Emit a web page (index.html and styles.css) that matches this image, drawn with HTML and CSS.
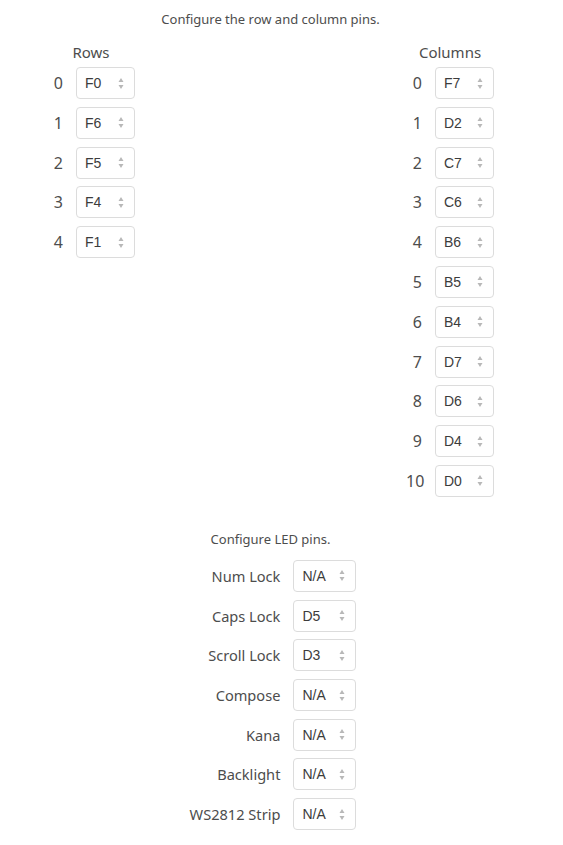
FILE: index.html
```html
<!DOCTYPE html>
<html lang="en">
<head>
<meta charset="utf-8">
<title>Pins</title>
<link rel="stylesheet" href="styles.css">
</head>
<body>
<div class="page">
  <p class="intro">Configure the row and column pins.</p>
  <div class="matrix">
    <section class="pin-group">
      <h3 class="group-title">Rows</h3>
      <div class="pin-list">
        <div class="pin-row"><span class="idx">0</span><div class="pin-select"><span>F0</span><svg class="spin" viewBox="0 0 6 11"><path d="M3 0 L5.5 4 L0.5 4 Z M3 11 L5.5 7 L0.5 7 Z"/></svg></div></div>
        <div class="pin-row"><span class="idx">1</span><div class="pin-select"><span>F6</span><svg class="spin" viewBox="0 0 6 11"><path d="M3 0 L5.5 4 L0.5 4 Z M3 11 L5.5 7 L0.5 7 Z"/></svg></div></div>
        <div class="pin-row"><span class="idx">2</span><div class="pin-select"><span>F5</span><svg class="spin" viewBox="0 0 6 11"><path d="M3 0 L5.5 4 L0.5 4 Z M3 11 L5.5 7 L0.5 7 Z"/></svg></div></div>
        <div class="pin-row"><span class="idx">3</span><div class="pin-select"><span>F4</span><svg class="spin" viewBox="0 0 6 11"><path d="M3 0 L5.5 4 L0.5 4 Z M3 11 L5.5 7 L0.5 7 Z"/></svg></div></div>
        <div class="pin-row"><span class="idx">4</span><div class="pin-select"><span>F1</span><svg class="spin" viewBox="0 0 6 11"><path d="M3 0 L5.5 4 L0.5 4 Z M3 11 L5.5 7 L0.5 7 Z"/></svg></div></div>
      </div>
    </section>
    <section class="pin-group">
      <h3 class="group-title">Columns</h3>
      <div class="pin-list">
        <div class="pin-row"><span class="idx">0</span><div class="pin-select"><span>F7</span><svg class="spin" viewBox="0 0 6 11"><path d="M3 0 L5.5 4 L0.5 4 Z M3 11 L5.5 7 L0.5 7 Z"/></svg></div></div>
        <div class="pin-row"><span class="idx">1</span><div class="pin-select"><span>D2</span><svg class="spin" viewBox="0 0 6 11"><path d="M3 0 L5.5 4 L0.5 4 Z M3 11 L5.5 7 L0.5 7 Z"/></svg></div></div>
        <div class="pin-row"><span class="idx">2</span><div class="pin-select"><span>C7</span><svg class="spin" viewBox="0 0 6 11"><path d="M3 0 L5.5 4 L0.5 4 Z M3 11 L5.5 7 L0.5 7 Z"/></svg></div></div>
        <div class="pin-row"><span class="idx">3</span><div class="pin-select"><span>C6</span><svg class="spin" viewBox="0 0 6 11"><path d="M3 0 L5.5 4 L0.5 4 Z M3 11 L5.5 7 L0.5 7 Z"/></svg></div></div>
        <div class="pin-row"><span class="idx">4</span><div class="pin-select"><span>B6</span><svg class="spin" viewBox="0 0 6 11"><path d="M3 0 L5.5 4 L0.5 4 Z M3 11 L5.5 7 L0.5 7 Z"/></svg></div></div>
        <div class="pin-row"><span class="idx">5</span><div class="pin-select"><span>B5</span><svg class="spin" viewBox="0 0 6 11"><path d="M3 0 L5.5 4 L0.5 4 Z M3 11 L5.5 7 L0.5 7 Z"/></svg></div></div>
        <div class="pin-row"><span class="idx">6</span><div class="pin-select"><span>B4</span><svg class="spin" viewBox="0 0 6 11"><path d="M3 0 L5.5 4 L0.5 4 Z M3 11 L5.5 7 L0.5 7 Z"/></svg></div></div>
        <div class="pin-row"><span class="idx">7</span><div class="pin-select"><span>D7</span><svg class="spin" viewBox="0 0 6 11"><path d="M3 0 L5.5 4 L0.5 4 Z M3 11 L5.5 7 L0.5 7 Z"/></svg></div></div>
        <div class="pin-row"><span class="idx">8</span><div class="pin-select"><span>D6</span><svg class="spin" viewBox="0 0 6 11"><path d="M3 0 L5.5 4 L0.5 4 Z M3 11 L5.5 7 L0.5 7 Z"/></svg></div></div>
        <div class="pin-row"><span class="idx">9</span><div class="pin-select"><span>D4</span><svg class="spin" viewBox="0 0 6 11"><path d="M3 0 L5.5 4 L0.5 4 Z M3 11 L5.5 7 L0.5 7 Z"/></svg></div></div>
        <div class="pin-row"><span class="idx">10</span><div class="pin-select"><span>D0</span><svg class="spin" viewBox="0 0 6 11"><path d="M3 0 L5.5 4 L0.5 4 Z M3 11 L5.5 7 L0.5 7 Z"/></svg></div></div>
      </div>
    </section>
  </div>

  <p class="intro led-intro">Configure LED pins.</p>
  <div class="led-grid">
    <span class="led-label">Num Lock</span><div class="pin-select led"><span>N/A</span><svg class="spin" viewBox="0 0 6 11"><path d="M3 0 L5.5 4 L0.5 4 Z M3 11 L5.5 7 L0.5 7 Z"/></svg></div>
    <span class="led-label">Caps Lock</span><div class="pin-select led"><span>D5</span><svg class="spin" viewBox="0 0 6 11"><path d="M3 0 L5.5 4 L0.5 4 Z M3 11 L5.5 7 L0.5 7 Z"/></svg></div>
    <span class="led-label">Scroll Lock</span><div class="pin-select led"><span>D3</span><svg class="spin" viewBox="0 0 6 11"><path d="M3 0 L5.5 4 L0.5 4 Z M3 11 L5.5 7 L0.5 7 Z"/></svg></div>
    <span class="led-label">Compose</span><div class="pin-select led"><span>N/A</span><svg class="spin" viewBox="0 0 6 11"><path d="M3 0 L5.5 4 L0.5 4 Z M3 11 L5.5 7 L0.5 7 Z"/></svg></div>
    <span class="led-label">Kana</span><div class="pin-select led"><span>N/A</span><svg class="spin" viewBox="0 0 6 11"><path d="M3 0 L5.5 4 L0.5 4 Z M3 11 L5.5 7 L0.5 7 Z"/></svg></div>
    <span class="led-label">Backlight</span><div class="pin-select led"><span>N/A</span><svg class="spin" viewBox="0 0 6 11"><path d="M3 0 L5.5 4 L0.5 4 Z M3 11 L5.5 7 L0.5 7 Z"/></svg></div>
    <span class="led-label">WS2812 Strip</span><div class="pin-select led"><span>N/A</span><svg class="spin" viewBox="0 0 6 11"><path d="M3 0 L5.5 4 L0.5 4 Z M3 11 L5.5 7 L0.5 7 Z"/></svg></div>
  </div>
</div>
</body>
</html>
```

FILE: styles.css
```css
* { box-sizing: border-box; }

body {
  margin: 0;
  background: #ffffff;
  font-family: "Noto Sans", "Open Sans", sans-serif;
  color: #4d4d4d;
}

.page {
  width: 541px;
}

.intro {
  margin: 10px 0 0;
  font-size: 13px;
  line-height: 18px;
  text-align: center;
  color: #4d4d4d;
}

.matrix {
  display: flex;
  justify-content: space-between;
  align-items: flex-start;
  width: 447px;
  margin: 14px 0 0 47px;
}

.pin-group {
  display: flex;
  flex-direction: column;
  align-items: center;
}

.group-title {
  margin: 0 0 5px;
  font-size: 15px;
  line-height: 20px;
  font-weight: 400;
  color: #4d4d4d;
}

.pin-list {
  display: flex;
  flex-direction: column;
  gap: 7.8px;
}

.pin-row {
  display: flex;
  align-items: center;
  gap: 13px;
}

.idx {
  width: 16px;
  text-align: right;
  font-size: 16px;
  line-height: 20px;
  color: #4d4d4d;
}

.pin-select {
  display: flex;
  align-items: center;
  justify-content: space-between;
  width: 59px;
  height: 32px;
  padding: 0 10px 0 8px;
  border: 1px solid #dcdcdc;
  border-radius: 4px;
  background: #ffffff;
  font-family: "Liberation Sans", Arial, sans-serif;
  font-size: 14px;
  color: #3c3c3c;
}

.pin-select.led {
  width: 63px;
  padding-left: 8px;
}

.spin {
  width: 6px;
  height: 11px;
  fill: #b8b8b8;
}

.led-intro {
  margin-top: 33px;
}

.led-grid {
  display: grid;
  grid-template-columns: auto 63px;
  justify-content: center;
  align-items: center;
  column-gap: 13px;
  row-gap: 7.7px;
  margin-top: 12px;
  padding-left: 5px;
}

.led-label {
  text-align: right;
  font-size: 14.6px;
  line-height: 20px;
  color: #4d4d4d;
}
```
